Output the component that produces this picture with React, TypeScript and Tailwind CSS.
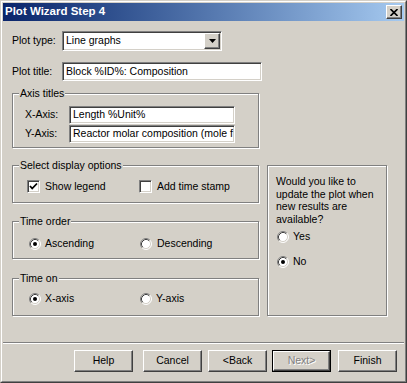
import React from 'react';

// classic 3D edges
const sunken =
  'border border-t-[#808080] border-l-[#808080] border-r-white border-b-white shadow-[inset_1px_1px_0_#404040,inset_-1px_-1px_0_#d4d0c8]';
const raised =
  'border border-t-white border-l-white border-r-[#404040] border-b-[#404040] shadow-[inset_-1px_-1px_0_#808080]';
const etched = 'border border-[#808080] shadow-[inset_1px_1px_0_#fff,1px_1px_0_#fff]';

const Radio: React.FC<{ checked?: boolean }> = ({ checked }) => (
  <svg width="12" height="12" viewBox="0 0 12 12" className="shrink-0">
    <circle cx="6" cy="6" r="5" fill="white" />
    <path d="M2.11 9.89 A5.5 5.5 0 0 1 9.89 2.11" stroke="#808080" fill="none" />
    <path d="M9.89 2.11 A5.5 5.5 0 0 1 2.11 9.89" stroke="#ffffff" fill="none" />
    <path d="M2.82 9.18 A4.5 4.5 0 0 1 9.18 2.82" stroke="#404040" fill="none" />
    <path d="M9.18 2.82 A4.5 4.5 0 0 1 2.82 9.18" stroke="#d4d0c8" fill="none" />
    {checked && <circle cx="6" cy="6" r="2" fill="black" />}
  </svg>
);

const Check: React.FC<{ checked?: boolean }> = ({ checked }) => (
  <div className={`w-[13px] h-[13px] bg-white shrink-0 flex items-center justify-center ${sunken}`}>
    {checked && (
      <svg width="9" height="9" viewBox="0 0 9 9">
        <polyline points="1,4 3.2,6.5 8,1.5" fill="none" stroke="black" strokeWidth="1.8" />
      </svg>
    )}
  </div>
);

const Group: React.FC<{ title?: string; className?: string; children?: React.ReactNode }> = ({
  title,
  className,
  children,
}) => (
  <div className={`relative ${etched} ${className || ''}`}>
    {title && (
      <span className="absolute -top-[8px] left-[6px] px-px bg-[#d4d0c8] leading-[14px]">{title}</span>
    )}
    {children}
  </div>
);

const Field: React.FC<{ value: string; className?: string }> = ({ value, className }) => (
  <div className={`bg-white flex items-center pl-[3px] overflow-hidden whitespace-nowrap ${sunken} ${className || ''}`}>
    {value}
  </div>
);

const Button: React.FC<{ label: string; className?: string; disabled?: boolean; isDefault?: boolean }> = ({
  label,
  className,
  disabled,
  isDefault,
}) =>
  isDefault ? (
    <div className={`w-[59px] h-[22px] border border-black ${className || ''}`}>
      <div className={`w-full h-full flex items-center justify-center ${raised}`}>
        <span className={disabled ? 'text-[#808080] [text-shadow:1px_1px_0_#fff]' : ''}>{label}</span>
      </div>
    </div>
  ) : (
    <div className={`w-[59px] h-[22px] flex items-center justify-center ${raised} ${className || ''}`}>
      <span className={disabled ? 'text-[#808080] [text-shadow:1px_1px_0_#fff]' : ''}>{label}</span>
    </div>
  );

export default function App() {
  return (
    <div className="w-[407px] h-[383px] bg-[#d4d0c8] border border-t-[#d4d0c8] border-l-[#d4d0c8] border-r-[#404040] border-b-[#404040] font-['Liberation_Sans',Arial,sans-serif] text-[10.5px] text-black">
      <div className="h-full border border-t-white border-l-white border-r-[#808080] border-b-[#808080] p-px flex flex-col">
        {/* title bar */}
        <div className="h-[18px] shrink-0 flex items-center justify-between pl-[2px] pr-[2px] bg-gradient-to-r from-[#0a246a] to-[#a6caf0]">
          <span className="text-white font-bold text-[11.5px] leading-none">Plot Wizard Step 4</span>
          <div className={`w-[16px] h-[14px] bg-[#d4d0c8] flex items-center justify-center ${raised}`}>
            <svg width="8" height="7" viewBox="0 0 8 7">
              <path d="M0.5 0 L7.5 7 M7.5 0 L0.5 7" stroke="black" strokeWidth="1.6" />
            </svg>
          </div>
        </div>

        {/* plot type */}
        <div className="mt-[10px] h-[20px] pl-[9px] flex items-center">
          <span className="w-[50px]">Plot type:</span>
          <div className={`w-[160px] h-[20px] bg-white flex ${sunken} p-px`}>
            <span className="flex-1 flex items-center pl-[2px]">Line graphs</span>
            <div className={`w-[16px] h-full bg-[#d4d0c8] flex items-center justify-center ${raised}`}>
              <svg width="7" height="4" viewBox="0 0 7 4">
                <polygon points="0,0 7,0 3.5,4" fill="black" />
              </svg>
            </div>
          </div>
        </div>

        {/* plot title */}
        <div className="mt-[11px] h-[19px] pl-[9px] flex items-center">
          <span className="w-[50px]">Plot title:</span>
          <Field value="Block %ID%: Composition" className="w-[200px] h-[19px]" />
        </div>

        {/* axis titles */}
        <Group title="Axis titles" className="mt-[12px] ml-[9px] w-[247px] h-[55px] pt-[12px] pl-[12px] flex flex-col gap-px">
          <div className="flex items-center h-[18px]">
            <span className="w-[44px]">X-Axis:</span>
            <Field value="Length %Unit%" className="w-[166px] h-[18px]" />
          </div>
          <div className="flex items-center h-[18px]">
            <span className="w-[44px]">Y-Axis:</span>
            <Field value="Reactor molar composition (mole f" className="w-[166px] h-[18px]" />
          </div>
        </Group>

        <div className="mt-[17px] ml-[9px] flex">
          <div className="w-[247px] flex flex-col">
            <Group title="Select display options" className="h-[38px] pt-[14px] pl-[14px]">
              <div className="flex h-[13px] items-center">
                <div className="w-[112px] flex items-center gap-[5px]">
                  <Check checked />
                  <span>Show legend</span>
                </div>
                <div className="flex items-center gap-[5px]">
                  <Check />
                  <span>Add time stamp</span>
                </div>
              </div>
            </Group>
            <Group title="Time order" className="mt-[18px] h-[38px] pt-[16px] pl-[16px]">
              <div className="flex h-[12px] items-center">
                <div className="w-[111px] flex items-center gap-[4px]">
                  <Radio checked />
                  <span>Ascending</span>
                </div>
                <div className="flex items-center gap-[5px]">
                  <Radio />
                  <span>Descending</span>
                </div>
              </div>
            </Group>
            <Group title="Time on" className="mt-[19px] h-[38px] pt-[14px] pl-[16px]">
              <div className="flex h-[12px] items-center">
                <div className="w-[111px] flex items-center gap-[4px]">
                  <Radio checked />
                  <span>X-axis</span>
                </div>
                <div className="flex items-center gap-[4px]">
                  <Radio />
                  <span>Y-axis</span>
                </div>
              </div>
            </Group>
          </div>

          <Group className="ml-[8px] w-[120px] pt-[9px] pl-[8px]">
            <p className="leading-[12.7px]">
              Would you like to
              <br />
              update the plot when
              <br />
              new results are
              <br />
              available?
            </p>
            <div className="mt-[5px] pl-px flex flex-col gap-[13px]">
              <div className="flex items-center gap-[4px] h-[12px]">
                <Radio />
                <span>Yes</span>
              </div>
              <div className="flex items-center gap-[4px] h-[12px]">
                <Radio checked />
                <span>No</span>
              </div>
            </div>
          </Group>
        </div>

        {/* footer */}
        <div className="mt-auto h-[2px] shrink-0 border-t border-t-[#808080] border-b border-b-white" />
        <div className="mt-[6px] mb-[8px] h-[22px] flex">
          <Button label="Help" className="ml-[71px]" />
          <Button label="Cancel" className="ml-[10px]" />
          <Button label="<Back" className="ml-[6px]" />
          <Button label="Next>" className="ml-[5px]" disabled isDefault />
          <Button label="Finish" className="ml-[7px]" />
        </div>
      </div>
    </div>
  );
}
